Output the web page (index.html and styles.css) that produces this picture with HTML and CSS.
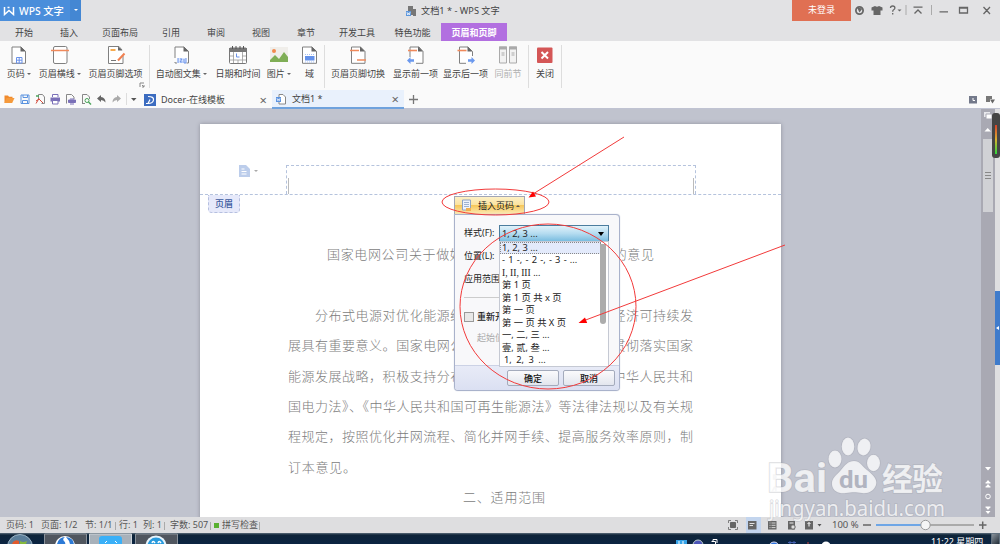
FILE: index.html
```html
<!DOCTYPE html>
<html>
<head>
    <title>文档1 * - WPS 文字</title>
    <meta http-equiv="Content-Type" content="text/html;charset=utf-8"/>
    <link rel="stylesheet" href="styles.css">
</head>
<body>
<div class="titlebar">
    <div class="brand">
        <svg width="12" height="10" viewBox="0 0 12 10"><path d="M1.500 1v7.500L6 4.500l4.500 4V1M4.500 1.500h2" fill="none" stroke="#fff" stroke-width="1.500"/></svg>
        <span>WPS 文字</span>
        <div class="brandmenu"><i class="caret"></i></div>
    </div>
    <div class="doctitle">
        <svg width="12" height="12" viewBox="0 0 12 12"><path d="M3 1h5v9H3zM8 4h3v7H8z" fill="#777"/><path d="M1 6h5v5H1z" fill="#5c96dc"/><path d="M2 7l.7 3 .8-2 .8 2L5 7" fill="none" stroke="#fff" stroke-width=".7"/></svg>
        <span>文档1 * - WPS 文字</span>
    </div>
    <div class="login">未登录</div>
    <svg class="winbuttons" width="149" height="21" viewBox="851 0 149 21" fill="none" stroke="#666" stroke-width="1.300">
        <circle cx="859.500" cy="10.500" r="3.600" stroke-width="1.800"/><path d="M857 7.500l2.500 5 3-4z" fill="#666" stroke="none"/>
        <path d="M875 6l-3.500 1.500v3h2V15h7v-4.500h2v-3L879 6q-2 1.500-4 0z" fill="#666" stroke="none"/>
        <path d="M890.500 8q0-2 2.200-2t2.200 2q0 1-1.300 1.800-.9.500-.9 2M892.700 13v1.500"/>
        <path d="M897.500 9.500h4l-2 2z" fill="#666" stroke="none"/>
        <path d="M906 5v10M931.500 5v10" stroke="#aaa" stroke-width="1"/>
        <path d="M913.500 7.200h9M914.500 13.500l3.500-3.500 3.500 3.500M939.500 11.800h8.500M959.500 7.500h8v5.500h-8zM959.500 8.200h8M983.500 7l6.500 7M990 7l-6.500 7"/>
    </svg>
</div>
<div class="menubar">
    <span class="w48">开始</span>
    <span class="w42">插入</span>
    <span class="w60">页面布局</span>
    <span class="w42">引用</span>
    <span class="w48">审阅</span>
    <span class="w42">视图</span>
    <span class="w48">章节</span>
    <span class="w54">开发工具</span>
    <span class="w57">特色功能</span>
    <span class="current">页眉和页脚</span>
</div>

<div class="ribbon">
    <div class="tool w38">
        <svg width="20" height="20" viewBox="0 0 20 20"><path class="sheet" d="M3 2h9l4.500 4.500V18.300H3z"/><path class="fold" d="M11.500 1.500v5H17z"/><path d="M7.500 12.500h5.500v5.500H7.500zM7.500 15.200H13M10.200 12.500V18" fill="#fff" stroke="#6a92e8"/></svg>
        <span>页码 <i class="caret"></i></span>
    </div>
    <div class="tool w44">
        <svg width="20" height="20" viewBox="0 0 20 20"><rect class="sheet" x="3.500" y="1.500" width="13.500" height="17" rx="1.500"/><path d="M1 5.500h18" stroke="#f08a5c" stroke-width="1.500"/></svg>
        <span>页眉横线 <i class="caret"></i></span>
    </div>
    <div class="tool w67">
        <svg width="20" height="20" viewBox="0 0 20 20"><path class="sheet" d="M17 11v7.500H2.500V1.500H13L16 5"/><path class="fold" d="M12 1.500v4h4.500z"/><path d="M4.500 5h5" stroke="#f5a13c" stroke-width="1.800"/><path d="M18.500 8.500l-6.500 7" stroke="#f08050" stroke-width="2"/><path d="M5 15.500h5" stroke="#777"/></svg>
        <span>页眉页脚选项</span>
        <svg class="launcher" width="6" height="6" viewBox="0 0 6 6"><path d="M1 5V1h4M3 3l2 2M5 3v2H3" fill="none" stroke="#888"/></svg>
    </div>
    <div class="divider"></div>
    <div class="tool w63">
        <svg width="20" height="20" viewBox="0 0 20 20"><path class="sheet" d="M3 13V2h9l4.500 4.500V18h-2M3 17v1h2"/><path class="fold" d="M11.500 1.500v5H17z"/><path d="M6 13h8v5H6z" fill="#dbe7ff"/><path d="M6 13v5M8 14h2l-2 3h2.500M14 13v5h-2v-4" fill="none" stroke="#6a92e8"/></svg>
        <span>自动图文集 <i class="caret"></i></span>
    </div>
    <div class="tool w50">
        <svg width="20" height="20" viewBox="0 0 20 20"><rect x="1.500" y="3" width="17" height="15.500" rx="1" fill="#fff" stroke="#777"/><path d="M1 3h18v4H1z" fill="#777"/><path d="M4.500 1v3M8 1v3M12 1v3M15.500 1v3" stroke="#555"/><path d="M2 11h16M2 15h16M5.500 7v11M14.500 7v11M10 15v3" stroke="#999" stroke-width=".8"/><path d="M6 8h8v6H6z" fill="#fff"/><path d="M8.500 8.500v3.500h3" fill="none" stroke="#6a92e8"/></svg>
        <span>日期和时间</span>
    </div>
    <div class="tool w32">
        <svg width="20" height="20" viewBox="0 0 20 20"><path d="M1 2h18v15H1z" fill="#f0eeea"/><circle cx="5" cy="6" r="2" fill="#f28a4e"/><path d="M1 17v-2l5-5 4 4 5-7 4 5v5z" fill="#7fae56"/></svg>
        <span>图片 <i class="caret"></i></span>
    </div>
    <div class="tool w29">
        <svg width="20" height="20" viewBox="0 0 20 20"><path class="sheet" d="M2.500 2h9.500l4.500 4.500V18.300h-14z"/><path class="fold" d="M11.500 1.500v5H17z"/><path d="M5 11h9.500v4.500H5z" fill="#6592ea"/><path d="M5 9.500h9.500M5 17h9.500" stroke="#a7c1f5" stroke-dasharray="1 1"/></svg>
        <span>域</span>
    </div>
    <div class="divider"></div>
    <div class="tool w66">
        <svg width="20" height="20" viewBox="0 0 20 20"><path class="sheet" d="M3.500 2h9l4.500 4.500V18.300H3.500z"/><path class="fold" d="M12 1.500v5h5z"/><path d="M2 5.500h9M9 15h9" stroke="#f08a5c" stroke-width="1.600"/></svg>
        <span>页眉页脚切换</span>
    </div>
    <div class="tool w49">
        <svg width="20" height="20" viewBox="0 0 20 20"><path class="sheet" d="M4 12V2h9l4 4.500V18.300h-7"/><path class="fold" d="M12 1.500v5h5z"/><path d="M2 5.500h9" stroke="#f08a5c" stroke-width="1.600"/><path d="M1 15.500L4.500 12v2.300H8v2.400H4.500V19z" fill="#6a98ee"/></svg>
        <span>显示前一项</span>
    </div>
    <div class="tool w51">
        <svg width="20" height="20" viewBox="0 0 20 20"><path class="sheet" d="M16.500 11V6.500L12 2H3.500v16.300H10"/><path class="fold" d="M11.500 1.500v5h5z"/><path d="M1.500 5.500h9" stroke="#f08a5c" stroke-width="1.600"/><path d="M19 15.500L15.500 12v2.300H12v2.400h3.500V19z" fill="#6a98ee"/></svg>
        <span>显示后一项</span>
    </div>
    <div class="tool w34 disabled">
        <svg width="20" height="20" viewBox="0 0 20 20" fill="#f2f2f2" stroke="#aaa"><path d="M1.500 2h7v16h-7zM11.500 2h7v16h-7z"/><path d="M1 3h8M11 3h8" stroke-width="3"/><path d="M3.500 8h3M3.500 10h3M13.500 8h3M13.500 10h3"/></svg>
        <span>同前节</span>
    </div>
    <div class="divider last"></div>
    <div class="tool w32">
        <svg width="20" height="20" viewBox="0 0 20 20"><rect x="2" y="2.500" width="15.500" height="15.500" rx="1" fill="#d45656"/><path d="M6.500 7l6.500 6.500M13 7l-6.500 6.500" stroke="#fff" stroke-width="2"/></svg>
        <span>关闭</span>
    </div>
    <div class="divider"></div>
</div>

<div class="tabbar">
    <svg width="141" height="18" viewBox="0 0 141 18" fill="none">
        <path d="M4.500 13V5.500H8l1 1.200h3.500v1.500" fill="#f08a2c"/><path d="M4.500 13L6.500 8h8l-2.300 5z" fill="#f59a3c"/>
        <path d="M21 5h8v8.500h-8zM23 5v2.500h4.500V5M22.500 10.500h5v3h-5z" stroke="#5b93e0"/>
        <path d="M38.500 9V4.500h4L44.500 7v6.500h-3" stroke="#888"/><path d="M36 11l3-2 4 4M36 13.500l3-5" stroke="#d44b3c"/><path d="M36 6h3" stroke="#4aa45a" stroke-width="1.500"/>
        <path d="M50.500 7.500h9.500v4h-9.500z" fill="#7a70b8"/><path d="M52.500 7V4.500H58V7M52.500 10.500H58v3.500h-5.500z" stroke="#7a70b8" fill="#fff"/>
        <path d="M66.500 13.500V4.500h5L74 7v2" stroke="#888"/><path d="M68.500 10h7v2.500h-7zM70 9h4M70 14h4" stroke="#7a70b8" fill="#7a70b8"/>
        <path d="M82.500 13.500v-9H87L89.500 7v2M82 13.500h3" stroke="#888"/><circle cx="87" cy="10.500" r="2" stroke="#4aa45a"/><path d="M88.500 12l2.500 2.500" stroke="#4aa45a" stroke-width="1.400"/>
        <path d="M97 8.500l4-3.500v2q4.500.5 4.500 5.500Q104 10 101 10v2z" fill="#666"/>
        <path d="M121 8.500L117 5v2q-4.500.5-4.500 5.500 1.500-2.500 4.500-2.500v2z" fill="#aaa"/>
        <path d="M126.500 3v12" stroke="#ddd"/><path d="M131 8h5.500l-2.700 3z" fill="#555"/>
    </svg>
    <div class="tab docer">
        <svg width="12" height="12" viewBox="0 0 12 12"><path d="M0 0h12v12H0z" fill="#3c6cc0"/><path d="M4 2.500q6 0 5.500 3.500T4 9.500l2-4M2 9.500h3" fill="none" stroke="#fff" stroke-width="1.200"/></svg>
        <span>Docer-在线模板</span>
        <b>×</b>
    </div>
    <div class="tab opened">
        <svg width="12" height="12" viewBox="0 0 12 12"><path d="M4 1.500h4L10.500 4v7H4z" fill="#fff" stroke="#888"/><path d="M1 4h5v5H1z" fill="#5b93e0"/><path d="M2 5.200l.8 2.500.7-1.500.8 1.500L5 5.200" fill="none" stroke="#fff" stroke-width=".7"/></svg>
        <span>文档1 *</span>
        <b>×</b>
    </div>
    <svg class="plus" width="14" height="18" viewBox="0 0 14 18"><path d="M5 9.500h9M9.500 5v9" stroke="#777" stroke-width="1.300"/></svg>
    <svg class="panes" width="32" height="18" viewBox="0 0 32 18"><path d="M1 6h8v7.500H1z" fill="#73798a"/><path d="M5 8v2.500h2" fill="none" stroke="#fff"/><path d="M18 6h6v3h-2v3h-4z" fill="#777"/><path d="M22 9.500h5l-2.500 4z" fill="#666"/></svg>
</div>

<div class="workspace">
    <div class="page">
        <div class="pageheader">
            <svg class="headicon" width="20" height="13" viewBox="0 0 20 13"><path d="M0 0h7l4 4v8H0z" fill="#bccdeb"/><path d="M2.500 4h3M2.500 6.500h5M2.500 9h5" stroke="#fff"/><path d="M15 5h4l-2 2z" fill="#aaa"/></svg>
            <div class="headbox"></div>
        </div>
        <div class="headtag">页眉</div>
        <div class="text">
            <h1>国家电网公司关于做好分布式电源并网服务工作的意见</h1>
            <p class="indent">分布式电源对优化能源结构、推动节能减排、实现经济可持续发</p>
            <p>展具有重要意义。国家电网公司高度重视，严格执行，贯彻落实国家</p>
            <p>能源发展战略，积极支持分布式电源加快发展，依据《中华人民共和</p>
            <p>国电力法》、《中华人民共和国可再生能源法》等法律法规以及有关规</p>
            <p>程规定，按照优化并网流程、简化并网手续、提高服务效率原则，制</p>
            <p class="short">订本意见。</p>
            <h2>二、适用范围</h2>
        </div>
    </div>
    <div class="scroll">
        <svg width="14" height="30" viewBox="0 0 14 30"><path d="M3 3h6v5H3z" fill="#e8e8ec"/><path d="M5 5h6v5H5z" fill="#fff" stroke="#a9a9b3"/><path d="M3.500 22.500h6.500L6.700 19z" fill="#fff"/></svg>
        <div class="thumb"><i></i><i></i><i></i></div>
        <svg class="down" width="14" height="54" viewBox="0 0 14 54" fill="#fff"><path d="M4 4h6L7 7.500zM4.500 20L7 17l2.500 3zM4.500 24L7 21l2.500 3zM4.500 44L7 47l2.500-3zM4.500 48L7 51l2.500-3z"/><path d="M4.500 20h5M4.500 24h5M4.500 44h5" stroke="#fff"/><circle cx="7" cy="33.500" r="2.300" fill="none" stroke="#fff"/></svg>
    </div>
    <div class="edge">
        <div class="gauge"><i></i></div>
        <div class="sidetab"><i></i></div>
    </div>
</div>

<div class="popup">
    <div class="popbutton">
        <svg width="12" height="13" viewBox="0 0 12 13"><path d="M1.500 1h8v10h-8z" fill="#eef3fb" stroke="#8ea3c4"/><path d="M3 3.500h5M3 5.500h5M3 7.500h5" stroke="#9fb2cf"/><path d="M5 9h5v3H5z" fill="#f0b050"/></svg>
        <span>插入页码</span>
        <i class="caretup"></i>
    </div>
    <div class="dialog">
        <div class="row"><label>样式(F):</label><div class="combo">1, 2, 3 ...<i></i></div></div>
        <div class="row"><label>位置(L):</label></div>
        <div class="row"><label>应用范围</label></div>
        <hr>
        <div class="row check"><i></i><label>重新开始</label></div>
        <div class="row start">起始值</div>
        <div class="buttons"><button>确定</button><button>取消</button></div>
        <ul class="options">
            <li class="picked">1, 2, 3 ...</li>
            <li class="dashes">- 1 -, - 2 -, - 3 - ...</li>
            <li class="roman">I, II, III ...</li>
            <li>第 1 页</li>
            <li>第 1 页 共 x 页</li>
            <li>第 一 页</li>
            <li>第 一 页 共 X 页</li>
            <li>一, 二, 三 ...</li>
            <li>壹, 贰, 叁 ...</li>
            <li class="wide">1, 2, 3 ...</li>
        </ul>
    </div>
</div>

<div class="statusbar">
    <span class="s1">页码: 1</span>
    <span class="s2">页面: 1/2</span>
    <span class="s3">节: 1/1</span>
    <span class="s4">行: 1</span>
    <span class="s5">列: 1</span>
    <span class="s6">字数: 507</span>
    <span class="s7"><i></i>拼写检查</span>
    <svg class="views" width="102" height="16" viewBox="724 0 102 16" fill="none" stroke="#666">
        <path d="M746 0h15v16h-15z" fill="#c3d5ee" stroke="none"/>
        <path d="M730.500 5.500h5v5h-5z" fill="#666"/><path d="M728.500 6V3.500h2.500M735 3.500h2.500V6M728.500 10v2.500h2.500M735 12.500h2.500V10" stroke-width=".8"/>
        <path d="M748 4h8.500v8.500H748z" fill="#666" stroke="none"/><path d="M749.500 6.500h5M749.500 8.500h3.500" stroke="#fff" stroke-width=".8"/>
        <path d="M768 4h8.500v8.500H768z" fill="#666" stroke="none"/><path d="M769.500 6h1M771.500 6h4M769.500 8.300h1M771.500 8.300h4M769.500 10.600h1M771.500 10.600h4" stroke="#eee" stroke-width=".8"/>
        <path d="M788 4h7v8.500h-7z" fill="#666" stroke="none"/><path d="M789.500 6h4" stroke="#eee"/><circle cx="793" cy="10" r="2.200" fill="#ddd"/>
        <path d="M805 4h8v8.500h-8z" fill="#666" stroke="none"/><path d="M809 5.500v4M807.500 7l1.500-1.500 1.500 1.500" stroke="#fff"/>
        <path d="M817.500 7h4l-2 2.500z" fill="#555" stroke="none"/>
    </svg>
    <span class="zoomtext">100 %</span>
    <svg class="zoom" width="130" height="16" viewBox="862 0 130 16"><path d="M863 8h8M979 8h7.500M982.700 4.500v7.500" stroke="#666" stroke-width="1.500"/><path d="M876 8h47" stroke="#6ea6e6" stroke-width="2"/><path d="M925 8h49" stroke="#999" stroke-width="1.500"/><circle cx="925.500" cy="8" r="4.700" fill="#f5f5f5" stroke="#999"/></svg>
</div>
<div class="taskbar">
    <svg width="180" height="11" viewBox="0 0 180 11">
        <circle cx="20" cy="14" r="12.500" fill="#5c7f9b" stroke="#9fb6c6"/><path d="M13 9q3-3 6-1v3h-7z" fill="#e25a2c"/><path d="M20 8q3 2 7 0l-1 3h-6z" fill="#86b93c"/>
        <path d="M44.500 1h42v11h-42z" fill="#50565f" stroke="#8a929b"/><circle cx="65" cy="13" r="10" fill="#fff"/><path d="M57 11q2-7 8-7-3 2-1 4t1 4z" fill="#2c7ad6"/><path d="M66 4q8 1 8 8h-4q0-4-4-8z" fill="#2c7ad6"/>
        <path d="M89.500 1h42v11h-42z" fill="#a8b1ba" stroke="#d0d5d9"/><rect x="99" y="3" width="23" height="12" rx="3" fill="#3ab0f8"/><path d="M105 10l2-2M115 8l2 2" stroke="#fff"/>
        <path d="M135.500 1h42v11h-42z" fill="#50565f" stroke="#8a929b"/><circle cx="156" cy="13" r="10.500" fill="#e8f4fc"/><circle cx="156" cy="13" r="8.500" fill="#299bde"/><path d="M152 10q1-3 3 0M158 10q1-3 3 0" fill="none" stroke="#fff" stroke-width="1.500"/>
    </svg>
    <svg class="tray" width="180" height="11" viewBox="670 0 180 11"><path d="M676 7h11v4h-11z" fill="#36a3e8"/><path d="M679 8v3M683 8v3" stroke="#fff"/><circle cx="698" cy="12" r="5" fill="#4c55b8" stroke="#bcc"/><path d="M711.500 8.500h4v3M713 8V6.500h4V10" fill="none" stroke="#fff"/><circle cx="774" cy="14" r="5" fill="#2e74e0" stroke="#dde"/><path d="M788 9.500h8M790 8v3M794 8v3" stroke="#4460b0"/><path d="M808 9v2" stroke="#c44"/><circle cx="826" cy="13" r="4.500" fill="#fff"/></svg>
    <div class="clock">11:22 星期四</div>
    <div class="showdesktop"></div>
</div>

<svg class="overlay" width="1000" height="544" viewBox="0 0 1000 544">
    <g fill="none" stroke="#f23a3a" stroke-width="1">
        <ellipse cx="495.500" cy="202" rx="53.500" ry="13"/>
        <ellipse cx="548" cy="306.500" rx="88" ry="82.500"/>
        <path d="M624 137L533 194M785 245L583 321"/>
    </g>
    <path d="M528.500 197.500l4.500-6 3 5zM578.500 323l6.500-5.500 2.200 5.500z" fill="#f00"/>
    <g class="watermark">
        <text x="767" y="492" font-size="40" textLength="60" lengthAdjust="spacingAndGlyphs" class="logo">Bai</text>
        <ellipse cx="835" cy="459" rx="6.500" ry="8.500"/>
        <ellipse cx="848" cy="446.500" rx="6.300" ry="9"/>
        <ellipse cx="864" cy="447" rx="6.500" ry="8.500" transform="rotate(12 864 447)"/>
        <ellipse cx="873.500" cy="463" rx="6.500" ry="8.300"/>
        <path d="M854 461c6 0 8 5 13 9s11 9 9 15-8 9-14 8-10-1-16 0-13-1-14-8 5-10 9-15 7-9 13-9z"/>
        <text x="839" y="488" font-size="24" textLength="29" lengthAdjust="spacingAndGlyphs" class="du">du</text>
        <text x="882" y="490" font-size="31" textLength="61" class="cn">经验</text>
        <text x="769" y="516" font-size="21" textLength="176" lengthAdjust="spacingAndGlyphs" class="url">jingyan.baidu.com</text>
    </g>
</svg>
</body>
</html>
```
FILE: styles.css
```css
* {
    box-sizing: border-box;
}
body {
    margin: 0;
    width: 1000px;
    height: 544px;
    overflow: hidden;
    display: flex;
    flex-direction: column;
    font-family: "Noto Sans", "Noto Sans CJK SC", sans-serif;
    font-size: 9px;
    line-height: 12px;
    color: #444;
    background: #e2e2e4;
}
svg {
    display: block;
    flex: none;
}
i {
    font-style: normal;
}
.caret {
    display: inline-block;
    border: 2px solid transparent;
    border-top: 2.5px solid #666;
    border-bottom: 0;
    vertical-align: 2px;
}
.titlebar {
    display: flex;
    height: 21px;
    flex: none;
}
.brand {
    display: flex;
    align-items: center;
    width: 81px;
    height: 21px;
    padding-left: 3px;
    background: #4a8edb;
    color: #fff;
    font-size: 10.300px;
    font-weight: 500;
    white-space: nowrap;
}
.brand span {
    margin-left: 4px;
    width: 51px;
}
.brandmenu {
    width: 11px;
    height: 21px;
    background: #4487d3;
    line-height: 19px;
    text-align: center;
}
.brandmenu .caret {
    border-top-color: #fff;
}
.doctitle {
    display: flex;
    align-items: center;
    width: 711px;
    padding-left: 324px;
}
.doctitle span {
    margin-left: 4px;
    font-size: 9.200px;
}
.login {
    width: 59px;
    background: #e07053;
    color: #fff;
    line-height: 20px;
    text-align: center;
}
.menubar {
    display: flex;
    height: 20px;
    flex: none;
    padding-top: 2px;
    line-height: 19px;
    text-align: center;
}
.menubar .current {
    width: 66px;
    background: #b26fe0;
    color: #fff;
    font-weight: bold;
}
.w29 { width: 29px; }
.w32 { width: 32px; }
.w34 { width: 34px; }
.w38 { width: 38px; }
.w42 { width: 42px; }
.w44 { width: 44px; }
.w48 { width: 48px; }
.w49 { width: 49px; }
.w50 { width: 50px; }
.w51 { width: 51px; }
.w54 { width: 54px; }
.w57 { width: 57px; }
.w60 { width: 60px; }
.w63 { width: 63px; }
.w66 { width: 66px; }
.w67 { width: 67px; }
.ribbon {
    display: flex;
    height: 49px;
    flex: none;
    padding-top: 4px;
    background: #fafafa;
}
.tool {
    display: flex;
    flex-direction: column;
    align-items: center;
    position: relative;
    gap: 3px;
    white-space: nowrap;
}
.disabled {
    color: #b0b0b0;
}
.sheet {
    fill: #fff;
    stroke: #808080;
    stroke-width: 1;
}
.fold {
    fill: #666;
}
.launcher {
    position: absolute;
    right: 4px;
    bottom: 2px;
}
.divider {
    width: 1px;
    height: 43px;
    background: #ddd;
}
.divider.last {
    margin-left: 3px;
}
.tabbar {
    display: flex;
    height: 19px;
    flex: none;
    background: #fafafa;
    border-bottom: 1px solid #c0c3d2;
}
.tab {
    display: flex;
    align-items: center;
    height: 19px;
    padding-left: 3px;
}
.tab span {
    flex: 1;
    margin-left: 5px;
}
.tab b {
    width: 12.500px;
    font-size: 13px;
    font-weight: normal;
    color: #666;
}
.docer {
    width: 131px;
}
.opened {
    width: 132px;
    padding-top: 1px;
    background: #e9f1fc;
    border-bottom: 2px solid #6fa2dd;
}
.panes {
    margin-left: auto;
}
.workspace {
    position: relative;
    display: flex;
    height: 408px;
    flex: none;
    overflow: hidden;
    background: #c0c3ce;
}
.page {
    width: 581px;
    height: 420px;
    margin: 15px 200px 0 200px;
    flex: none;
    background: #fff;
    box-shadow: 0 0 4px #8d909b;
}
.pageheader {
    display: flex;
    height: 71px;
    padding: 41px 0 0 39px;
    border-bottom: 1px dashed #b5c3dd;
}
.headbox {
    width: 410px;
    height: 29px;
    margin-left: 27px;
    border: 1px dashed #b5c3dd;
    border-bottom: 0;
    background: linear-gradient(#bbb, #bbb) 1px 12px / 1px 18px no-repeat, linear-gradient(#bbb, #bbb) 406px 12px / 1px 18px no-repeat;
}
.headtag {
    width: 32px;
    height: 18px;
    margin-left: 8px;
    border: 1px dashed #b5bfdf;
    border-top: 0;
    border-radius: 0 0 4px 4px;
    background: #e6e9fa;
    color: #3c5a9e;
    font-weight: 500;
    line-height: 17px;
    text-align: center;
}
.text {
    width: 405px;
    margin: 26px 0 0 88px;
    font-family: "Noto Sans CJK SC", sans-serif;
    font-weight: 300;
    font-size: 13px;
    color: #7c7c7c;
}
.text h1, .text h2, .text p {
    margin: 0;
    height: 30.400px;
    line-height: 30.400px;
    font-size: 13px;
    font-weight: 300;
    text-align-last: justify;
    white-space: nowrap;
}
.text h1 {
    width: 327px;
    margin: 0 0 30.400px 39px;
}
.text .indent {
    padding-left: 27px;
}
.text .short {
    width: 68px;
}
.text h2 {
    width: 82px;
    margin-left: 175px;
}
.scroll {
    display: flex;
    flex-direction: column;
    width: 14px;
    background: #a9a9b3;
    flex: none;
}
.thumb {
    display: flex;
    flex-direction: column;
    justify-content: center;
    align-items: center;
    gap: 2px;
    width: 10px;
    height: 73px;
    margin-left: 2px;
    background: #d0d1d5;
}
.thumb i {
    width: 6px;
    height: 1px;
    background: #888;
}
.down {
    margin-top: auto;
}
.edge {
    width: 5px;
    height: 408px;
    flex: none;
    background: #dfdfe1;
    padding-top: 182px;
}
.gauge {
    position: absolute;
    left: 992px;
    top: 4px;
    width: 8px;
    height: 45px;
    border-radius: 3px;
    background: #454545;
    padding: 12px 3px 3px 3px;
}
.gauge i {
    display: block;
    width: 2px;
    height: 29px;
    background: linear-gradient(#d8402c, #d8b030 50%, #2cd83c);
}
.sidetab {
    height: 74px;
    padding: 35px 0 0 1px;
    background: #3f7bcb;
}
.sidetab i {
    display: block;
    width: 0;
    border: 2px solid transparent;
    border-left: 0;
    border-right: 3px solid #fff;
}
.popup {
    position: absolute;
    left: 454px;
    top: 196px;
    width: 166px;
    color: #222;
}
.popbutton {
    display: flex;
    align-items: center;
    width: 71px;
    height: 18px;
    padding-left: 6px;
    border: 1px solid #a2a6b4;
    border-bottom: 0;
    background: linear-gradient(#fdf0c5, #fbe3a0 45%, #f6c75b 50%, #fceab5);
}
.popbutton span {
    margin: 0 2px 0 5px;
}
.caretup {
    border: 2px solid transparent;
    border-top: 0;
    border-bottom: 2px solid #555;
}
.dialog {
    position: relative;
    height: 177px;
    padding: 10px 0 0 9px;
    background: #f8f8fa;
    border: 1px solid #a9b2cb;
    border-radius: 0 4px 4px 4px;
    box-shadow: 0 0 1px #a9b2cb;
}
.row {
    display: flex;
    height: 23px;
    line-height: 16px;
    white-space: nowrap;
}
.row label {
    width: 35px;
}
.combo {
    display: flex;
    justify-content: space-between;
    align-items: center;
    width: 110px;
    height: 17px;
    padding: 0 4px 0 2px;
    border: 1px solid #4c7d9e;
    background: linear-gradient(#e0f2fa, #b5dcf0 50%, #7abde0);
    font-size: 9.300px;
}
.combo i {
    border: 3px solid transparent;
    border-top: 4px solid #000;
    border-bottom: 0;
}
.dialog hr {
    width: 140px;
    height: 1px;
    margin: 3px 0 11px 0;
    border: 0;
    background: #ccc;
}
.check {
    height: 21px;
    font-weight: 500;
}
.check i {
    width: 10px;
    height: 10px;
    margin: 3px 3px 0 0;
    border: 1px solid #999;
    background: #e8e8e8;
}
.start {
    padding-left: 13px;
    color: #aaa;
}
.buttons {
    position: absolute;
    left: 0;
    right: 0;
    bottom: 0;
    display: flex;
    gap: 4px;
    height: 25px;
    padding: 4px 0 0 52px;
    border-top: 1px solid #ccd2e5;
    background: linear-gradient(#e8ebf7, #dbe0f2);
    border-radius: 0 0 3px 3px;
}
.buttons button {
    width: 52px;
    height: 16px;
    padding: 0;
    border: 1px solid #a4abbc;
    border-radius: 2px;
    background: linear-gradient(#fafafc, #e3e6ee);
    font: inherit;
    font-weight: 500;
    line-height: 13px;
    color: #111;
}
.options {
    position: absolute;
    left: 44px;
    top: 26px;
    width: 110px;
    height: 126px;
    margin: 0;
    padding: 0;
    list-style: none;
    border: 1px solid #c5c9d3;
    background: #fff;
    font-size: 9.300px;
    white-space: nowrap;
}
.options:after {
    content: "";
    position: absolute;
    right: 2px;
    top: 2px;
    width: 6px;
    height: 80px;
    border-radius: 0 0 3px 3px;
    background: #acacac;
}
.options li {
    height: 12.450px;
    padding-left: 2px;
    line-height: 12.450px;
}
.options .picked {
    width: 101px;
    background: #e3eafb;
    outline: 1px dotted #888;
    outline-offset: -1px;
}
.options .dashes {
    word-spacing: .8px;
}
.options .roman {
    font-family: "Liberation Serif", serif;
    font-size: 9.600px;
}
.options .wide {
    padding-left: 4px;
    word-spacing: 2px;
}
.statusbar {
    display: flex;
    height: 16px;
    flex: none;
    background: #dedee0;
    line-height: 16px;
    color: #555;
    white-space: nowrap;
}
.s1 {
    width: 41px;
    padding-left: 6px;
}
.s2 {
    width: 44px;
}
.s3, .s5, .s6, .s7 {
    background: linear-gradient(#aaa, #aaa) right 5px / 1px 8px no-repeat;
}
.s3 { width: 31px; }
.s4 { width: 27px; padding-left: 3px; }
.s5 { width: 22px; }
.s6 { width: 46px; padding-left: 5px; }
.s7 {
    display: flex;
    align-items: center;
    width: 49px;
}
.s7 i {
    width: 5px;
    height: 5px;
    margin: 0 3px;
    background: #58b030;
}
.views {
    margin-left: 464px;
}
.zoomtext {
    width: 36px;
    padding-left: 6px;
    font-size: 9.500px;
}
.taskbar {
    display: flex;
    height: 11px;
    flex: none;
    overflow: hidden;
    background: linear-gradient(#5c6c7a, #0e2439 2px, #0b2442);
}
.tray {
    margin-left: 490px;
}
.clock {
    width: 141px;
    padding: 3px 0 0 81px;
    color: #fff;
    white-space: nowrap;
}
.showdesktop {
    width: 9px;
    height: 12px;
    background: linear-gradient(135deg, #8a939c, #222d38);
    border: 1px solid #60707e;
}
.overlay {
    position: absolute;
    left: 0;
    top: 0;
}
.watermark {
    fill: #fff;
    fill-opacity: .75;
    stroke: #999ca6;
    stroke-opacity: .35;
    stroke-width: 1.5;
    paint-order: stroke;
    font-family: Roboto, sans-serif;
}
.logo {
    font-weight: bold;
}
.du {
    fill: #b1b4c0;
    font-weight: bold;
    stroke: none;
    fill-opacity: 1;
}
.cn {
    font-family: "Noto Sans CJK SC", sans-serif;
    font-weight: bold;
}
.url {
    font-family: "Noto Sans", sans-serif;
}
```
